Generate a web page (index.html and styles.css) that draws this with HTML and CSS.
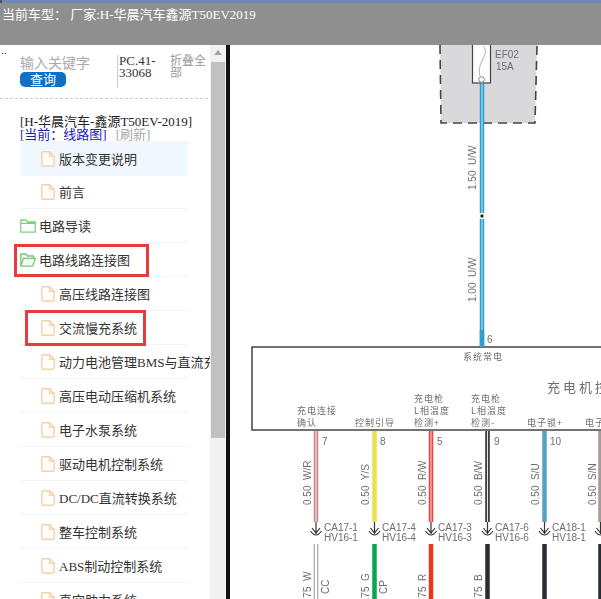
FILE: index.html
```html
<!DOCTYPE html>
<html lang="zh">
<head>
    <meta charset="UTF-8">
    <meta name="viewport" content="width=device-width, initial-scale=1.0">
    <title>当前车型</title>
    <link rel="stylesheet" href="styles.css">
</head>
<body>

    <svg class="icon-defs" width="0" height="0">
        <symbol id="icon-doc" viewBox="0 0 14 16">
            <path d="M1.8 .8H8.6L13.2 5.4V13.8Q13.2 15.2 11.8 15.2H2.2Q.8 15.2 .8 13.8V1.8Q.8 .8 1.8 .8ZM8.6 .8V5.4H13.2" fill="#fffdfa" stroke="#f3d2ad" stroke-width="1.4"/>
        </symbol>
        <symbol id="icon-folder" viewBox="0 0 16 14">
            <path d="M.8 13.2V1H6L7.6 3H15.2V13.2ZM.8 4.4H15.2" fill="#fff" stroke="#80cf80" stroke-width="1.3"/>
        </symbol>
        <symbol id="icon-folder-open" viewBox="0 0 16 14">
            <path d="M.8 13.2V1H6L7.6 3H13.6V5.4M.8 13.2L3.4 5.4H15.4L12.6 13.2Z" fill="#f4fbf3" stroke="#74c674" stroke-width="1.3"/>
        </symbol>
    </svg>

    <div class="topbar">
        <div class="topbar-strip"></div>
        <div class="topbar-title">当前车型： 厂家:H-华晨汽车鑫源T50EV2019</div>
    </div>

    <div class="main">
        <div class="sidebar">
            <div class="dots">..</div>
            <div class="search-row">
                <div class="search-box">
                    <input class="search-input" type="text" placeholder="输入关键字">
                    <button class="search-btn">查询</button>
                </div>
                <div class="part-no">PC.41-33068</div>
                <div class="collapse-all">折叠全部</div>
            </div>
            <div class="divider"></div>

            <div class="car-name">[H-华晨汽车-鑫源T50EV-2019]</div>
            <div class="current"><a class="current-link">[当前：线路图]</a><a class="refresh">[刷新]</a></div>

            <ul class="tree">
                <li class="row row-active"><svg class="doc"><use href="#icon-doc"/></svg>版本变更说明</li>
                <li class="row"><svg class="doc"><use href="#icon-doc"/></svg>前言</li>
                <li class="row row-folder"><svg class="folder"><use href="#icon-folder"/></svg>电路导读</li>
                <li class="row row-folder"><svg class="folder"><use href="#icon-folder-open"/></svg>电路线路连接图</li>
                <li class="row"><svg class="doc"><use href="#icon-doc"/></svg>高压线路连接图</li>
                <li class="row"><svg class="doc"><use href="#icon-doc"/></svg>交流慢充系统</li>
                <li class="row"><svg class="doc"><use href="#icon-doc"/></svg>动力电池管理BMS与直流充电系统</li>
                <li class="row"><svg class="doc"><use href="#icon-doc"/></svg>高压电动压缩机系统</li>
                <li class="row"><svg class="doc"><use href="#icon-doc"/></svg>电子水泵系统</li>
                <li class="row"><svg class="doc"><use href="#icon-doc"/></svg>驱动电机控制系统</li>
                <li class="row"><svg class="doc"><use href="#icon-doc"/></svg>DC/DC直流转换系统</li>
                <li class="row"><svg class="doc"><use href="#icon-doc"/></svg>整车控制系统</li>
                <li class="row"><svg class="doc"><use href="#icon-doc"/></svg>ABS制动控制系统</li>
                <li class="row"><svg class="doc"><use href="#icon-doc"/></svg>真空助力系统</li>
            </ul>

            <!-- 红框标注 -->
            <div class="mark mark-folder"></div>
            <div class="mark mark-item"></div>
        </div>

        <div class="scrollbar">
            <div class="scroll-arrow"></div>
            <div class="scroll-thumb"></div>
        </div>

        <div class="diagram">
            <!-- viewBox follows page coordinates: x from 230, y from 45 -->
            <svg class="wiring" viewBox="230 45 371 554" width="371" height="554">
                <polygon points="440,45 537,45 535,123 441,123" fill="#d9d9db"/>
                <polyline points="440,45 441,123 535,123 537,45" fill="none" stroke="#444" stroke-width="1.6" stroke-dasharray="9 6"/>
                <rect x="472.5" y="44" width="18" height="39" fill="#fff" stroke="#444" stroke-width="1.2"/>
                <path d="M483 46C491 54 476 62 480 76" fill="none" stroke="#999" stroke-width=".8"/>
                <circle cx="481.5" cy="79.500" r="2.800" fill="#fff" stroke="#777" stroke-width=".9"/>
                <text class="lbl" x="495" y="58">EF02</text>
                <text class="lbl" x="496" y="70">15A</text>

                <line class="wire-edge" x1="482" y1="84" x2="482" y2="347" stroke="#2f9fd0"/>
                <line x1="482" y1="84" x2="482" y2="347" stroke="#8fd6ef" stroke-width="1.400"/>
                <rect x="479" y="213" width="6" height="6" fill="#fff"/>
                <circle cx="482" cy="216" r="1.700" fill="#222"/>
                <text class="lbl" transform="translate(476 190) rotate(-90)">1.50  U/W</text>
                <text class="lbl" transform="translate(476 302) rotate(-90)">1.00  U/W</text>
                <text class="lbl" x="487" y="343">6</text>

                <rect x="252" y="347" width="380" height="83" fill="#fff" stroke="#444" stroke-width="1.500"/>
                <line class="wire-edge" x1="482" y1="330" x2="482" y2="347" stroke="#2f9fd0"/>
                <text class="pin" x="463" y="360">系统常电</text>
                <text class="unit" x="547" y="392">充电机控制器</text>

                <text class="pin" x="297" y="414">充电连接</text>
                <text class="pin" x="297" y="426">确认</text>
                <text class="pin" x="355" y="426">控制引导</text>
                <text class="pin" x="414" y="402">充电枪</text>
                <text class="pin" x="414" y="414">L相温度</text>
                <text class="pin" x="414" y="426">检测+</text>
                <text class="pin" x="471" y="402">充电枪</text>
                <text class="pin" x="471" y="414">L相温度</text>
                <text class="pin" x="471" y="426">检测-</text>
                <text class="pin" x="527" y="426">电子锁+</text>
                <text class="pin" x="585" y="426">电子锁-</text>

                <!-- upper wires -->
                <line class="wire-edge" x1="316" y1="431" x2="316" y2="522" stroke="#c9858a"/>
                <line x1="316" y1="431" x2="316" y2="522" stroke="#f3e4e4" stroke-width="1.200"/>
                <line class="wire-edge" x1="374.500" y1="431" x2="374.500" y2="522" stroke="#e9e14e"/>
                <line class="wire-edge" x1="431" y1="431" x2="431" y2="522" stroke="#e8453c"/>
                <line x1="431" y1="431" x2="431" y2="522" stroke="#f6c8c0" stroke-width="1.200"/>
                <line class="wire-edge" x1="487.500" y1="431" x2="487.500" y2="522" stroke="#2b2b30"/>
                <line x1="487.500" y1="431" x2="487.500" y2="522" stroke="#e8e8e8" stroke-width="1.200"/>
                <line class="wire-edge" x1="544.500" y1="431" x2="544.500" y2="522" stroke="#5b9fc4"/>
                <line class="wire-edge" x1="600.500" y1="431" x2="600.500" y2="522" stroke="#a89a94"/>

                <text class="lbl" x="322" y="445">7</text>
                <text class="lbl" x="380" y="445">8</text>
                <text class="lbl" x="437" y="445">5</text>
                <text class="lbl" x="494" y="445">9</text>
                <text class="lbl" x="550" y="445">10</text>

                <text class="lbl" transform="translate(311 505) rotate(-90)">0.50  W/R</text>
                <text class="lbl" transform="translate(369 505) rotate(-90)">0.50  Y/S</text>
                <text class="lbl" transform="translate(426 505) rotate(-90)">0.50  R/W</text>
                <text class="lbl" transform="translate(482 505) rotate(-90)">0.50  B/W</text>
                <text class="lbl" transform="translate(539 505) rotate(-90)">0.50  S/U</text>
                <text class="lbl" transform="translate(596 505) rotate(-90)">0.50  S/N</text>

                <!-- connectors -->
                <path class="plug" d="M316 522V534M312 528L316 533L320 528M310.500 531Q316 539 321.500 531"/>
                <path class="plug" d="M374.500 522V534M370.500 528L374.500 533L378.500 528M369 531Q374.500 539 380 531"/>
                <path class="plug" d="M431 522V534M427 528L431 533L435 528M425.500 531Q431 539 436.500 531"/>
                <path class="plug" d="M487.500 522V534M483.500 528L487.500 533L491.500 528M482 531Q487.500 539 493 531"/>
                <path class="plug" d="M544.500 522V534M540.500 528L544.500 533L548.500 528M539 531Q544.500 539 550 531"/>
                <path class="plug" d="M600.500 522V534M596.500 528L600.500 533M595 531Q600.500 539 606 531"/>

                <text class="lbl" x="324" y="531">CA17-1</text>
                <text class="lbl" x="324" y="541">HV16-1</text>
                <text class="lbl" x="382" y="531">CA17-4</text>
                <text class="lbl" x="382" y="541">HV16-4</text>
                <text class="lbl" x="438" y="531">CA17-3</text>
                <text class="lbl" x="438" y="541">HV16-3</text>
                <text class="lbl" x="495" y="531">CA17-6</text>
                <text class="lbl" x="495" y="541">HV16-6</text>
                <text class="lbl" x="552" y="531">CA18-1</text>
                <text class="lbl" x="552" y="541">HV18-1</text>

                <!-- lower wires -->
                <line class="wire-edge" x1="316" y1="544" x2="316" y2="599" stroke="#8a8a8a"/>
                <line x1="316" y1="544" x2="316" y2="599" stroke="#fff" stroke-width="2.600"/>
                <line class="wire-edge" x1="374.500" y1="544" x2="374.500" y2="599" stroke="#0aa551"/>
                <line class="wire-edge" x1="431" y1="544" x2="431" y2="599" stroke="#e9361f"/>
                <line class="wire-edge" x1="487.500" y1="544" x2="487.500" y2="599" stroke="#2a2b30"/>
                <line class="wire-edge" x1="544.500" y1="544" x2="544.500" y2="599" stroke="#2a2b30"/>
                <line class="wire-edge" x1="600.500" y1="544" x2="600.500" y2="599" stroke="#2a2b30"/>

                <text class="lbl" transform="translate(311 606) rotate(-90)">0.75  W</text>
                <text class="lbl" transform="translate(369 606) rotate(-90)">0.75  G</text>
                <text class="lbl" transform="translate(426 606) rotate(-90)">0.75  R</text>
                <text class="lbl" transform="translate(482 606) rotate(-90)">0.75  B</text>
                <text class="lbl" transform="translate(329 594) rotate(-90)">CC</text>
                <text class="lbl" transform="translate(387 594) rotate(-90)">CP</text>
            </svg>
        </div>
    </div>

</body>
</html>
```

FILE: styles.css
```css
/* Global Style */
html, body {
    margin: 0;
    padding: 0;
    height: 100%;
    overflow: hidden;
}

body {
    font-family: 'Liberation Serif', 'Noto Sans CJK SC', serif;
    background-color: #fff;
    color: #333;
}

.icon-defs {
    position: absolute;
}

.topbar {
    height: 45px;
    background-color: #8f8f8f;
}

.topbar-strip {
    box-sizing: border-box;
    height: 3px;
    border-left: 2px solid #555;
    background-color: #6f87bd;
}

.topbar-title {
    padding: 3px 0 0 2px;
    font-size: 13px;
    line-height: 17px;
    color: #fff;
    white-space: nowrap;
}

.main {
    display: flex;
    height: 554px;
}

/* Left tree */
.sidebar {
    position: relative;
    width: 210px;
    overflow: hidden;
    flex-shrink: 0;
}

.dots {
    height: 11px;
    padding-left: 1px;
    font-size: 11px;
    line-height: 11px;
    color: #333;
}

.search-row {
    display: flex;
    height: 32px;
    padding-left: 20px;
}

.search-box {
    width: 97px;
}

.search-input {
    display: block;
    width: 90px;
    height: 16px;
    padding: 0;
    border: none;
    outline: none;
    font-family: inherit;
    font-size: 14px;
}

.search-input::placeholder {
    color: #aaa;
}

.search-btn {
    display: block;
    width: 46px;
    height: 15px;
    padding: 0;
    border: none;
    border-radius: 5px;
    background-color: #0f70c4;
    color: #fff;
    font-family: inherit;
    font-size: 13px;
    line-height: 15px;
}

.part-no {
    width: 40px;
    height: 33px;
    margin: -1px 11px 0 0;
    padding-left: 1px;
    border-left: 1px solid #ccc;
    font-size: 13px;
    line-height: 12px;
    color: #333;
    word-break: break-word;
}

.collapse-all {
    width: 38px;
    margin-top: -1px;
    font-size: 12px;
    line-height: 12px;
    color: #999;
}

.divider {
    margin-top: 10px;
    width: 208px;
    border-top: 1px dashed #ccc;
}

.car-name {
    margin-top: 16px;
    padding-left: 20px;
    font-size: 13px;
    line-height: 13px;
    color: #222;
    white-space: nowrap;
}

.current {
    padding-left: 20px;
    font-size: 13px;
    line-height: 13px;
    white-space: nowrap;
}

.current-link {
    color: #1a1ab4;
}

.refresh {
    margin-left: 9px;
    color: #aaa;
}

.tree {
    margin: 0;
    padding: 0 0 0 20px;
    list-style: none;
}

.row {
    display: flex;
    align-items: center;
    box-sizing: border-box;
    width: 168px;
    height: 34px;
    padding-left: 21px;
    border-bottom: 1px solid #f5f5f5;
    font-size: 13px;
    color: #333;
    white-space: nowrap;
}

.row-active {
    height: 35px;
    margin-bottom: -1px;
    background-color: #f0f7fd;
    border-bottom: none;
}

.row-folder {
    padding-left: 0;
}

.doc {
    width: 14px;
    height: 16px;
    margin-right: 4px;
    flex-shrink: 0;
}

.folder {
    width: 16px;
    height: 14px;
    margin-right: 3px;
    flex-shrink: 0;
}

.mark {
    position: absolute;
    box-sizing: border-box;
    border: 3px solid #e53c3e;
}

.mark-folder {
    left: 14px;
    top: 199px;
    width: 135px;
    height: 33px;
}

.mark-item {
    left: 25px;
    top: 265px;
    width: 121px;
    height: 36px;
}

/* Scrollbar */
.scrollbar {
    width: 16px;
    flex-shrink: 0;
    background-color: #f1f1f1;
}

.scroll-arrow {
    width: 0;
    height: 0;
    margin: 5px auto 7px;
    border-left: 4px solid transparent;
    border-right: 4px solid transparent;
    border-bottom: 5px solid #a3a3a3;
}

.scroll-thumb {
    width: 14px;
    height: 376px;
    margin-left: 1px;
    background-color: #c1c1c1;
}

/* Wiring diagram */
.diagram {
    flex: 1;
    border-left: 4px solid #111;
    background-color: #fff;
    overflow: hidden;
}

.wiring {
    display: block;
    filter: blur(.25px);
}

.wiring text {
    fill: #6e6e6e;
}

.wire-edge {
    stroke-width: 4.500;
}

.plug {
    fill: none;
    stroke: #333;
    stroke-width: 1.200;
}

.lbl {
    font-family: 'Liberation Sans', sans-serif;
    font-size: 10px;
    white-space: pre;
}

.pin {
    font-family: 'Noto Sans CJK SC', sans-serif;
    font-size: 9px;
    letter-spacing: 1px;
}

.unit {
    font-family: 'Noto Sans CJK SC', sans-serif;
    font-size: 13px;
    letter-spacing: 3px;
}
```
